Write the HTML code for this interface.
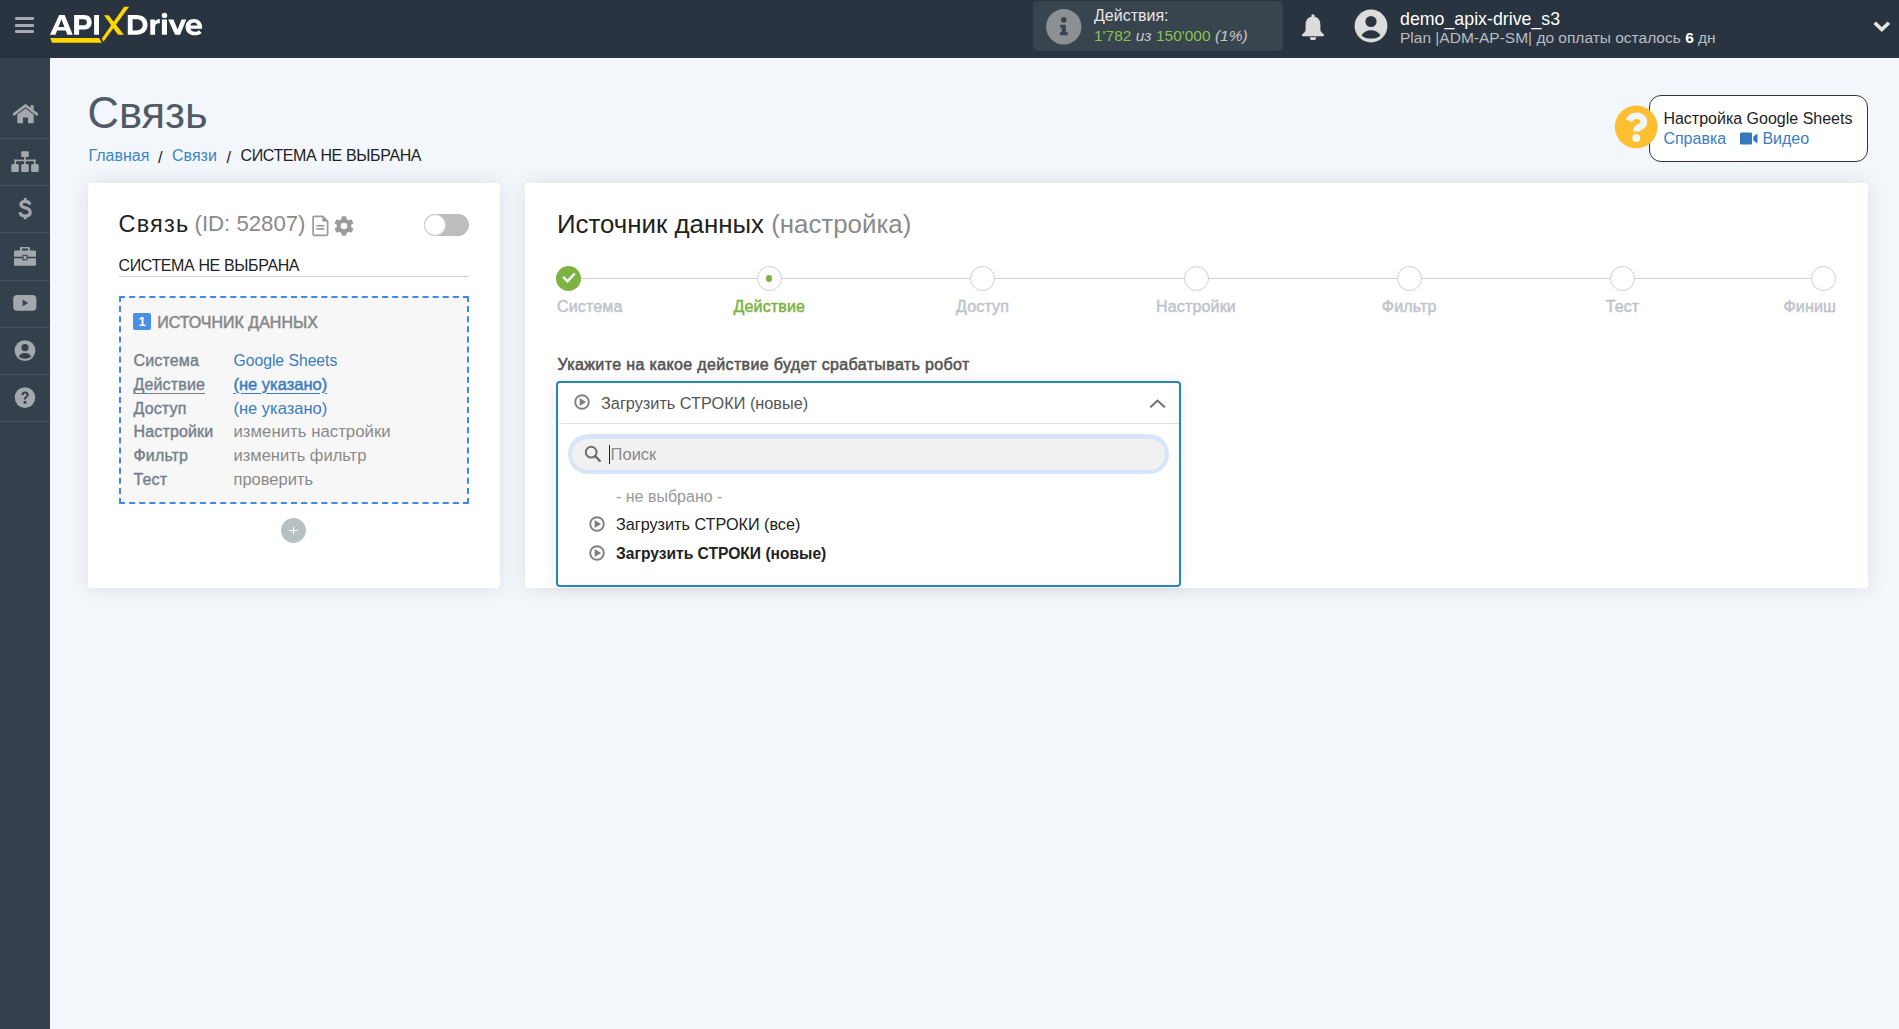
<!DOCTYPE html>
<html><head><meta charset="utf-8">
<style>
*{box-sizing:border-box}
html,body{margin:0;padding:0}
body{width:1899px;height:1029px;overflow:hidden;background:#f3f6fa;font-family:"Liberation Sans",sans-serif;position:relative}
.a{position:absolute;white-space:nowrap;line-height:1}
#hdr{position:absolute;left:0;top:0;width:1899px;height:58px;background:#2a3441}
#side{position:absolute;left:0;top:58px;width:50px;height:971px;background:#35404d}
.sep{position:absolute;left:0;width:50px;height:1px;background:#46515e}
.card{position:absolute;background:#fff;border-radius:4px;box-shadow:0 0 20px rgba(40,50,70,0.11)}
</style></head>
<body>
<div id="hdr">
  <!-- hamburger -->
  <div class="a" style="left:15.4px;top:17px;width:19px;height:3px;background:#a7abb0;border-radius:1px"></div>
  <div class="a" style="left:15.4px;top:23.6px;width:19px;height:3px;background:#a7abb0;border-radius:1px"></div>
  <div class="a" style="left:15.4px;top:30.1px;width:19px;height:3px;background:#a7abb0;border-radius:1px"></div>
  <!-- logo -->
  <svg class="a" style="left:0;top:0" width="220" height="58" viewBox="0 0 220 58">
    <g fill="#fff" fill-rule="evenodd">
      <path d="M50,34.7 L59.2,15 L64.7,15 L72.7,34.7 L67.3,34.7 L65.7,30.6 L57.1,30.6 L55.5,34.7 Z M58.4,27 L61.4,19.3 L64.4,27 Z"/>
      <path d="M74.1,15 H84 C89,15 91.7,17.8 91.7,22.2 C91.7,26.6 89,29.5 84,29.5 H79.1 V34.7 H74.1 Z M79.1,19.2 H83.6 C85.8,19.2 86.9,20.3 86.9,22.2 C86.9,24.1 85.8,25.3 83.6,25.3 H79.1 Z"/>
      <rect x="94.1" y="15" width="4.9" height="19.7"/>
      <path d="M127.8,15 H136.5 C143.5,15 147.5,18.8 147.5,24.85 C147.5,30.9 143.5,34.7 136.5,34.7 H127.8 Z M132.6,19.3 H136.2 C140.4,19.3 142.7,21.3 142.7,24.85 C142.7,28.4 140.4,30.4 136.2,30.4 H132.6 Z"/>
      <path d="M150.3,19.6 H154.9 V21.6 C155.9,20 157.6,19 159.8,18.9 V23.4 C159.4,23.3 159,23.3 158.6,23.3 C156.4,23.3 155.1,24.6 155.1,27.2 V34.7 H150.3 Z"/>
      <circle cx="164.5" cy="15.4" r="2.7"/>
      <rect x="161.9" y="19.5" width="5.1" height="15.2"/>
      <path d="M168.2,19.5 H173.4 L177.6,29.4 L181.5,19.5 H186.3 L180.1,34.7 H175.1 Z"/>
      <path d="M202,28.8 H190.4 C191,30.8 192.6,31.8 194.9,31.8 C196.6,31.8 197.8,31.3 199,30.2 L201.6,32.9 C200,34.4 197.7,35.2 194.7,35.2 C189.3,35.2 185.6,32 185.6,27.15 C185.6,22.3 189.2,19.1 193.9,19.1 C198.5,19.1 202.1,22.1 202.1,27.2 C202.1,27.7 202,28.3 202,28.8 Z M190.3,25.6 H197.6 C197.2,23.6 195.8,22.4 193.95,22.4 C192.1,22.4 190.7,23.6 190.3,25.6 Z"/>
    </g>
    <polygon points="50.2,38 99,38 101.9,42.8 52.1,42.8" fill="#ffd600"/>
    <polygon points="101.9,38.6 124.1,6.7 129.1,6.7 103.4,41.8" fill="#ffd600"/>
    <polygon points="104,15.3 108.6,15.3 123.9,34.7 118,34.7" fill="#ffd600"/>
  </svg>
  <!-- actions box -->
  <div class="a" style="left:1033px;top:1px;width:250px;height:50px;background:#38444e;border-radius:5px"></div>
  <svg class="a" style="left:1046px;top:8.7px" width="36" height="36" viewBox="0 0 36 36">
    <circle cx="17.8" cy="17.8" r="17.7" fill="#8a9094"/>
    <circle cx="17.8" cy="10.8" r="2.8" fill="#38444e"/>
    <path d="M14 15.8 H19.8 V23.1 H21.6 V26.3 H14 V23.1 H15.7 V18.6 H14 Z" fill="#38444e"/>
  </svg>
  <div class="a" style="left:1094px;top:8px;font-size:16px;color:#e6e6e6">Действия:</div>
  <div class="a" style="left:1094px;top:28.1px;font-size:15.5px;color:#8dc152">1'782 <i style="color:#c8c8c8">из</i> 150'000 <i style="color:#c8c8c8">(1%)</i></div>
  <!-- bell -->
  <svg class="a" style="left:1301px;top:13.5px" width="24" height="26" viewBox="0 0 24 26">
    <circle cx="12" cy="2" r="1.7" fill="#dcdcdc"/>
    <path d="M12 2.5 C7 2.5 4.6 6.3 4.6 10.8 V15.8 C4.6 16.8 4.1 17.6 3.3 18.4 L1.3 20.3 C0.5 21.1 1 22.2 2.1 22.2 H21.9 C23 22.2 23.5 21.1 22.7 20.3 L20.7 18.4 C19.9 17.6 19.4 16.8 19.4 15.8 V10.8 C19.4 6.3 17 2.5 12 2.5 Z" fill="#dcdcdc"/>
    <path d="M8.8 23.2 H15.2 A3.2 3.2 0 0 1 8.8 23.2 Z" fill="#dcdcdc"/>
  </svg>
  <!-- avatar -->
  <svg class="a" style="left:1354px;top:9px" width="34" height="34" viewBox="0 0 34 34">
    <circle cx="17" cy="17" r="16.4" fill="#dcdcdc"/>
    <circle cx="17" cy="12.5" r="5.6" fill="#2a3441"/>
    <path d="M7.5 26.5 C9.5 22.8 13 21.2 17 21.2 C21 21.2 24.5 22.8 26.5 26.5 C24 28.8 20.8 29.6 17 29.6 C13.2 29.6 10 28.8 7.5 26.5 Z" fill="#2a3441"/>
  </svg>
  <svg class="a" style="left:1870px;top:18px" width="24" height="18" viewBox="0 0 24 18">
    <path d="M6 6 L11.8 11.5 L17.6 6" stroke="#e6e6e6" stroke-width="3.6" fill="none" stroke-linecap="square"/>
  </svg>
  <div class="a" style="left:1400px;top:10.5px;font-size:17.8px;color:#fff">demo_apix-drive_s3</div>
  <div class="a" style="left:1400px;top:30px;font-size:15.5px;color:#b9bdc1">Plan |ADM-AP-SM| до оплаты осталось <b style="color:#fff">6</b> дн</div>
</div>
<div id="side">
  <div class="sep" style="top:79.9px"></div>
  <div class="sep" style="top:127.1px"></div>
  <div class="sep" style="top:174.3px"></div>
  <div class="sep" style="top:221.5px"></div>
  <div class="sep" style="top:268.7px"></div>
  <div class="sep" style="top:315.9px"></div>
  <div class="sep" style="top:363.1px"></div>
  <!-- home -->
  <svg class="a" style="left:12.5px;top:46px" width="25" height="20" viewBox="0 0 25 20">
    <path d="M1.2 10.2 L12.5 1.5 L23.8 10.2" stroke="#a3a8ad" stroke-width="2.8" fill="none" stroke-linecap="round" stroke-linejoin="round"/>
    <rect x="17.6" y="1.2" width="3" height="6" fill="#a3a8ad"/>
    <path d="M4.3 10.6 L12.5 4.4 L20.7 10.6 V18.2 Q20.7 19.2 19.7 19.2 H15 V13.6 H10 V19.2 H5.3 Q4.3 19.2 4.3 18.2 Z" fill="#a3a8ad"/>
  </svg>
  <!-- sitemap -->
  <svg class="a" style="left:11px;top:92.8px" width="28" height="22" viewBox="0 0 28 22">
    <rect x="10.2" y="0.2" width="7.6" height="5.8" rx="1" fill="#a3a8ad"/>
    <rect x="13.2" y="5.5" width="1.6" height="4" fill="#a3a8ad"/>
    <rect x="3.5" y="8.6" width="21" height="1.6" fill="#a3a8ad"/>
    <rect x="3.5" y="8.6" width="1.6" height="5" fill="#a3a8ad"/>
    <rect x="13.2" y="8.6" width="1.6" height="5" fill="#a3a8ad"/>
    <rect x="22.9" y="8.6" width="1.6" height="5" fill="#a3a8ad"/>
    <rect x="0.3" y="13" width="7.6" height="8" rx="1.6" fill="#a3a8ad"/>
    <rect x="10.2" y="13" width="7.6" height="8" rx="1.6" fill="#a3a8ad"/>
    <rect x="20.1" y="13" width="7.6" height="8" rx="1.6" fill="#a3a8ad"/>
  </svg>
  <!-- dollar -->
  <svg class="a" style="left:17px;top:139px" width="16" height="23" viewBox="0 0 16 23">
    <path d="M12.9 7.6 C12.6 5.5 10.8 4.5 8.2 4.5 C5.5 4.5 3.9 5.7 3.9 7.5 C3.9 9.4 5.6 10.1 8.2 10.8 C11.4 11.6 13.2 12.7 13.2 15.3 C13.2 17.8 11.2 19 8.2 19 C5.2 19 3.3 17.8 3 15.3" stroke="#a3a8ad" stroke-width="3.1" fill="none"/>
    <rect x="6.8" y="1" width="2.9" height="4.5" fill="#a3a8ad"/>
    <rect x="6.8" y="17.8" width="2.9" height="4.4" fill="#a3a8ad"/>
  </svg>
  <!-- briefcase -->
  <svg class="a" style="left:14px;top:189px" width="22" height="19" viewBox="0 0 22 19">
    <path d="M7 4 V1.6 Q7 0.5 8.1 0.5 H13.9 Q15 0.5 15 1.6 V4" stroke="#a3a8ad" stroke-width="2" fill="none"/>
    <path d="M0 5 Q0 3.5 1.5 3.5 H20.5 Q22 3.5 22 5 V9.8 H0 Z" fill="#a3a8ad"/>
    <path d="M0 11.3 H22 V17.3 Q22 18.8 20.5 18.8 H1.5 Q0 18.8 0 17.3 Z" fill="#a3a8ad"/>
    <rect x="9" y="8.3" width="4" height="4.5" fill="#a3a8ad" stroke="#35404d" stroke-width="1"/>
  </svg>
  <!-- youtube -->
  <svg class="a" style="left:13px;top:237px" width="24" height="16" viewBox="0 0 24 16">
    <rect x="0.2" y="0" width="23.2" height="15.7" rx="4" fill="#a3a8ad"/>
    <path d="M9.6 4.6 L15.2 7.9 L9.6 11.2 Z" fill="#35404d"/>
  </svg>
  <!-- user -->
  <svg class="a" style="left:14px;top:281.5px" width="22" height="22" viewBox="0 0 22 22">
    <circle cx="11" cy="10.6" r="10.4" fill="#a3a8ad"/>
    <circle cx="11" cy="7.6" r="3.6" fill="#35404d"/>
    <path d="M4.8 16.6 C6 14 8.3 13 11 13 C13.7 13 16 14 17.2 16.6 C15.6 18.2 13.5 18.8 11 18.8 C8.5 18.8 6.4 18.2 4.8 16.6 Z" fill="#35404d"/>
  </svg>
  <!-- question -->
  <svg class="a" style="left:14px;top:328.8px" width="22" height="22" viewBox="0 0 22 22">
    <circle cx="11" cy="10.6" r="10.3" fill="#a3a8ad"/>
    <path d="M7.4 8.2 C7.4 5.9 9 4.6 11.1 4.6 C13.3 4.6 14.8 5.9 14.8 7.8 C14.8 9.4 13.8 10.1 12.7 10.8 C12.1 11.2 12 11.5 12 12.4 H9.9 C9.9 11 10.2 10.2 11.3 9.5 C12.2 8.9 12.6 8.6 12.6 7.9 C12.6 7.2 12 6.6 11.1 6.6 C10.1 6.6 9.5 7.2 9.5 8.2 Z" fill="#35404d"/>
    <circle cx="11" cy="15.3" r="1.5" fill="#35404d"/>
  </svg>
</div>

<!-- page title -->
<div class="a" style="left:87.5px;top:92.3px;font-size:43.5px;color:#4f5b66">Связь</div>
<div class="a" style="left:88.5px;top:147.5px;font-size:16px;color:#3d85c6">Главная</div>
<div class="a" style="left:158px;top:149px;font-size:16.5px;color:#222">/</div>
<div class="a" style="left:172px;top:147.5px;font-size:16px;color:#3d85c6">Связи</div>
<div class="a" style="left:226.5px;top:149px;font-size:16.5px;color:#222">/</div>
<div class="a" style="left:240.5px;top:147.5px;font-size:16px;letter-spacing:-0.38px;color:#222">СИСТЕМА НЕ ВЫБРАНА</div>

<!-- left card -->
<div class="card" style="left:88px;top:183px;width:412px;height:405px"></div>
<div class="a" style="left:118.5px;top:212.5px;font-size:23.5px;letter-spacing:1.2px;color:#222">Связь</div>
<div class="a" style="left:194.5px;top:213.2px;font-size:22.2px;color:#8a8a8a">(ID: 52807)</div>
<svg class="a" style="left:312px;top:214.5px" width="17" height="22" viewBox="0 0 17 22">
  <path d="M2.4 1.3 H10.6 L15.6 6.3 V19 Q15.6 20.3 14.3 20.3 H2.4 Q1.1 20.3 1.1 19 V2.6 Q1.1 1.3 2.4 1.3 Z" fill="none" stroke="#9a9a9a" stroke-width="1.7"/>
  <path d="M10.3 1.6 V6.6 H15.3 Z" fill="#9a9a9a"/>
  <rect x="4.3" y="9.9" width="8" height="1.7" fill="#9a9a9a"/>
  <rect x="4.3" y="13.1" width="8" height="1.7" fill="#9a9a9a"/>
</svg>
<svg class="a" style="left:332.6px;top:214.5px" width="22" height="22" viewBox="0 0 22 22">
  <g transform="translate(11 11)" fill="#9a9a9a">
    <circle r="7.4"/><rect x="-2.4" y="-9.7" width="4.8" height="5" rx="0.8" transform="rotate(0)"/><rect x="-2.4" y="-9.7" width="4.8" height="5" rx="0.8" transform="rotate(60)"/><rect x="-2.4" y="-9.7" width="4.8" height="5" rx="0.8" transform="rotate(120)"/><rect x="-2.4" y="-9.7" width="4.8" height="5" rx="0.8" transform="rotate(180)"/><rect x="-2.4" y="-9.7" width="4.8" height="5" rx="0.8" transform="rotate(240)"/><rect x="-2.4" y="-9.7" width="4.8" height="5" rx="0.8" transform="rotate(300)"/>
    <circle r="3.3" fill="#fff"/>
  </g>
</svg>
<div class="a" style="left:423.5px;top:214px;width:45px;height:22px;border-radius:11px;background:#bdbdbd"></div>
<div class="a" style="left:424.5px;top:215px;width:20px;height:20px;border-radius:50%;background:#fff;box-shadow:0 0 0 1px #d0d0d0"></div>
<div class="a" style="left:118.5px;top:258px;font-size:16px;letter-spacing:-0.38px;color:#222">СИСТЕМА НЕ ВЫБРАНА</div>
<div class="a" style="left:119px;top:276px;width:350px;height:1px;background:#cfcfcf"></div>
<div class="a" style="left:119px;top:296px;width:350px;height:208px;border:2px dashed #3d8be8;background:#f7f7f7"></div>
<div class="a" style="left:133px;top:313.4px;width:18px;height:17px;border-radius:2px;background:#4a8ee6;color:#fff;font-weight:700;font-size:13px;line-height:17px;text-align:center">1</div>
<div class="a" style="left:157.2px;top:314.6px;font-size:16px;-webkit-text-stroke:0.55px #888;color:#888">ИСТОЧНИК ДАННЫХ</div>
<div class="a" style="left:133.5px;top:349px;font-size:16px;letter-spacing:0.15px;-webkit-text-stroke:0.4px #73808c;color:#73808c;line-height:23.78px">Система<br><span style="text-decoration:underline;text-underline-offset:3px">Действие</span><br>Доступ<br>Настройки<br>Фильтр<br>Тест</div>
<div class="a" style="left:233.5px;top:349px;font-size:16.5px;color:#3a7cc0;line-height:23.78px"><span style="font-size:15.7px">Google Sheets</span><br><span style="text-decoration:underline;text-underline-offset:3px;-webkit-text-stroke:0.45px #3a7cc0">(не указано)</span><br>(не указано)<br><span style="color:#8a8a8a"><span style="font-size:16.8px">изменить настройки</span><br>изменить фильтр<br>проверить</span></div>
<div class="a" style="left:281px;top:518px;width:25px;height:25px;border-radius:50%;background:#b6c2c2"></div>
<div class="a" style="left:289.4px;top:529.7px;width:8.4px;height:1.5px;background:#fff"></div>
<div class="a" style="left:292.7px;top:526.9px;width:1.8px;height:7px;background:#fff"></div>

<!-- right card -->
<div class="card" style="left:525px;top:183px;width:1343px;height:405px"></div>
<div class="a" style="left:557px;top:212px;font-size:25.85px;color:#222">Источник данных <span style="color:#8a8a8a">(настройка)</span></div>
<div class="a" style="left:568px;top:277.5px;width:1256px;height:1.5px;background:#d2d2d2"></div>
<svg class="a" style="left:556.0px;top:266px" width="25" height="25" viewBox="0 0 25 25"><circle cx="12.5" cy="12.5" r="12.5" fill="#7cb342"/><path d="M7.1 10.9 L11.5 15.2 L18.8 7.5" stroke="#fff" stroke-width="2.4" fill="none" stroke-linecap="butt" stroke-linejoin="miter"/></svg>
<div class="a" style="left:557px;top:298.7px;font-size:16px;letter-spacing:0.15px;-webkit-text-stroke:0.5px #bfc4cc;color:#bfc4cc">Система</div>
<div class="a" style="left:756.8px;top:266px;width:25px;height:25px;border-radius:50%;border:1px solid #cfcfcf;background:#fff"></div>
<div class="a" style="left:766.0999999999999px;top:275.3px;width:6.4px;height:6.4px;border-radius:50%;background:#7cb342"></div>
<div class="a" style="left:669.3px;width:200px;text-align:center;top:298.7px;font-size:16px;letter-spacing:0.15px;-webkit-text-stroke:0.5px #7cb342;color:#7cb342">Действие</div>
<div class="a" style="left:970.1px;top:266px;width:25px;height:25px;border-radius:50%;border:1px solid #cfcfcf;background:#fff"></div>
<div class="a" style="left:882.6px;width:200px;text-align:center;top:298.7px;font-size:16px;letter-spacing:0.15px;-webkit-text-stroke:0.5px #bfc4cc;color:#bfc4cc">Доступ</div>
<div class="a" style="left:1183.5px;top:266px;width:25px;height:25px;border-radius:50%;border:1px solid #cfcfcf;background:#fff"></div>
<div class="a" style="left:1096px;width:200px;text-align:center;top:298.7px;font-size:16px;letter-spacing:0.15px;-webkit-text-stroke:0.5px #bfc4cc;color:#bfc4cc">Настройки</div>
<div class="a" style="left:1396.7px;top:266px;width:25px;height:25px;border-radius:50%;border:1px solid #cfcfcf;background:#fff"></div>
<div class="a" style="left:1309.2px;width:200px;text-align:center;top:298.7px;font-size:16px;letter-spacing:0.15px;-webkit-text-stroke:0.5px #bfc4cc;color:#bfc4cc">Фильтр</div>
<div class="a" style="left:1610.0px;top:266px;width:25px;height:25px;border-radius:50%;border:1px solid #cfcfcf;background:#fff"></div>
<div class="a" style="left:1522.5px;width:200px;text-align:center;top:298.7px;font-size:16px;letter-spacing:0.15px;-webkit-text-stroke:0.5px #bfc4cc;color:#bfc4cc">Тест</div>
<div class="a" style="left:1811.0px;top:266px;width:25px;height:25px;border-radius:50%;border:1px solid #cfcfcf;background:#fff"></div>
<div class="a" style="left:1636px;width:200px;text-align:right;top:298.7px;font-size:16px;letter-spacing:0.15px;-webkit-text-stroke:0.5px #bfc4cc;color:#bfc4cc">Финиш</div>
<div class="a" style="left:557.5px;top:356.6px;font-size:16px;letter-spacing:0.36px;-webkit-text-stroke:0.55px #555;color:#555">Укажите на какое действие будет срабатывать робот</div>
<div class="a" style="left:555.5px;top:381px;width:625px;height:205.6px;border:2px solid #2785b8;border-radius:4px;background:#fff;box-shadow:0 0 16px rgba(0,0,0,0.09)"></div>
<svg class="a" style="left:574px;top:394px" width="16" height="16" viewBox="0 0 16 16"><circle cx="8" cy="8" r="6.8" fill="none" stroke="#808080" stroke-width="1.9"/><path d="M5.7 3.9 L12.1 8 L5.7 12.1 Z" fill="#808080"/></svg>
<div class="a" style="left:601px;top:395.1px;font-size:16.3px;color:#555">Загрузить СТРОКИ (новые)</div>
<svg class="a" style="left:1146px;top:395px" width="24" height="16" viewBox="0 0 24 16"><path d="M4.9 11.8 L11.5 5.5 L18.3 11.8" stroke="#707070" stroke-width="2" fill="none" stroke-linecap="round" stroke-linejoin="miter"/></svg>
<div class="a" style="left:558.5px;top:422.7px;width:620px;height:1px;background:#dedede"></div>
<div class="a" style="left:568px;top:434.3px;width:601px;height:39.6px;border-radius:20px;background:#d7e5fb"></div>
<div class="a" style="left:572px;top:438.6px;width:593px;height:31px;border-radius:16px;background:#f1f1f1"></div>
<svg class="a" style="left:583px;top:444px" width="20" height="20" viewBox="0 0 20 20"><circle cx="8.2" cy="8.2" r="5.4" fill="none" stroke="#6f6f6f" stroke-width="2"/><path d="M12.2 12.2 L16.8 16.8" stroke="#6f6f6f" stroke-width="2.4" stroke-linecap="round"/></svg>
<div class="a" style="left:609px;top:445px;width:1.3px;height:18.5px;background:#222"></div>
<div class="a" style="left:610.6px;top:445.5px;font-size:16.5px;color:#8a8a8a">Поиск</div>
<div class="a" style="left:616px;top:488.8px;font-size:16px;color:#999">- не выбрано -</div>
<svg class="a" style="left:589px;top:516px" width="16" height="16" viewBox="0 0 16 16"><circle cx="8" cy="8" r="6.8" fill="none" stroke="#808080" stroke-width="1.9"/><path d="M5.7 3.9 L12.1 8 L5.7 12.1 Z" fill="#808080"/></svg>
<div class="a" style="left:616px;top:515.6px;font-size:16.2px;color:#222">Загрузить СТРОКИ (все)</div>
<svg class="a" style="left:589px;top:545px" width="16" height="16" viewBox="0 0 16 16"><circle cx="8" cy="8" r="6.8" fill="none" stroke="#808080" stroke-width="1.9"/><path d="M5.7 3.9 L12.1 8 L5.7 12.1 Z" fill="#808080"/></svg>
<div class="a" style="left:616px;top:545.5px;font-size:15.6px;font-weight:700;color:#222">Загрузить СТРОКИ (новые)</div>

<!-- help -->
<div class="a" style="left:1649px;top:95px;width:219px;height:67px;border:1.5px solid #333;border-radius:12px;background:#fff"></div>
<svg class="a" style="left:1614px;top:104.5px" width="44" height="44" viewBox="0 0 44 44"><circle cx="22.2" cy="21.9" r="21.4" fill="#fdbf32"/>
<path d="M14.9 15.8 C16.3 12.6 19 10.8 22.5 10.8 C26.8 10.8 29.9 13.4 29.9 16.9 C29.9 19.6 28.3 20.8 26 22 C23.5 23.3 22.3 24.5 22.3 26.6" fill="none" stroke="#f2f5fa" stroke-width="6.6"/>
<circle cx="22.3" cy="32.9" r="4" fill="#f2f5fa"/></svg>
<div class="a" style="left:1663.4px;top:110.5px;font-size:16px;color:#222">Настройка Google Sheets</div>
<div class="a" style="left:1663.4px;top:131px;font-size:16px;color:#3b7dc4">Справка</div>
<svg class="a" style="left:1740px;top:132px" width="19" height="13" viewBox="0 0 19 13"><rect x="0" y="0.5" width="12" height="12" rx="1.2" fill="#3479bd"/><path d="M13.3 4.5 L17.5 1.5 V11.5 L13.3 8.5 Z" fill="#3479bd"/></svg>
<div class="a" style="left:1762.4px;top:131px;font-size:16px;color:#3b7dc4">Видео</div>
</body></html>
